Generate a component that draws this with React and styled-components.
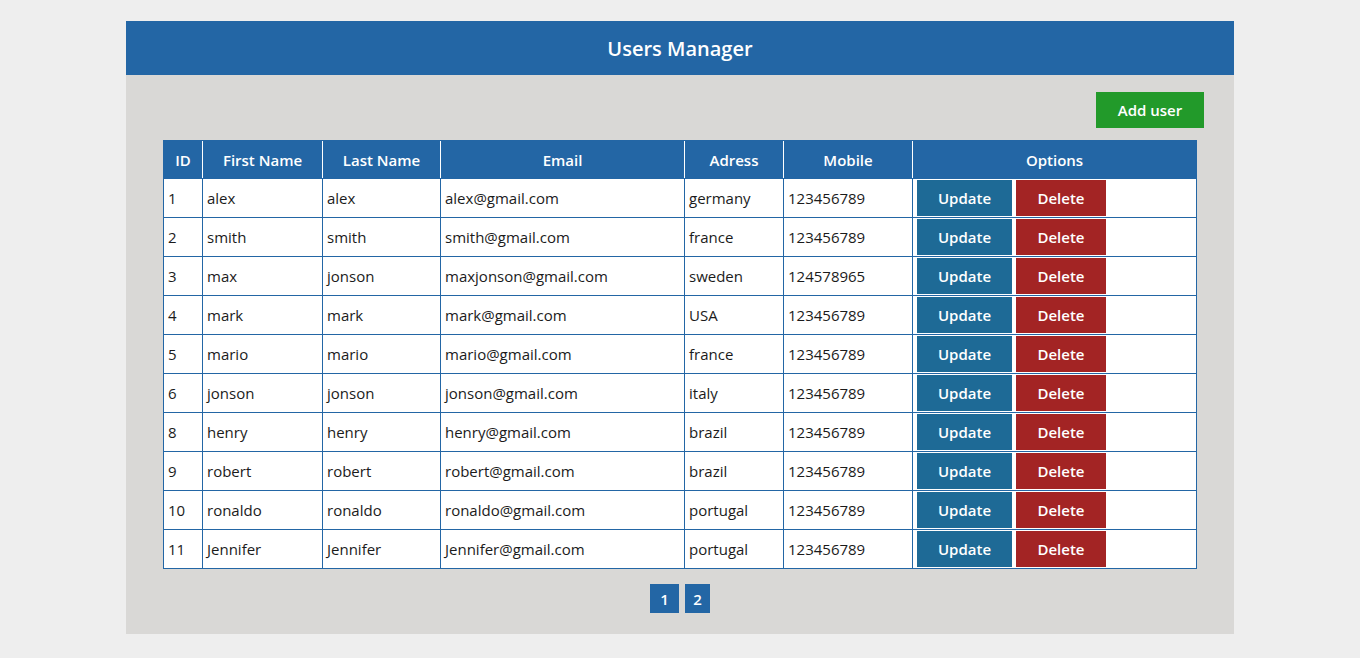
import React from "react";
import styled, { createGlobalStyle } from "styled-components";

const Global = createGlobalStyle`
  html, body { margin: 0; padding: 0; background: #eeeeee; }
  body { font-family: "Open Sans", "Noto Sans", sans-serif; }
  * { box-sizing: border-box; }
`;

const Page = styled.div`
  padding: 21px 126px 24px;
`;

const Panel = styled.div`
  background: #d9d8d6;
  display: flex;
  flex-direction: column;
`;

const Header = styled.header`
  height: 54px;
  background: #2366a5;
  color: #fff;
  display: flex;
  align-items: center;
  justify-content: center;
  font-size: 20px;
  font-weight: 600;
`;

const Body = styled.div`
  padding: 17px 37px 21px 37px;
  display: flex;
  flex-direction: column;
`;

const Toolbar = styled.div`
  display: flex;
  justify-content: flex-end;
  margin: 0 -7px 12px 0;
`;

const Button = styled.button`
  border: none;
  font-family: inherit;
  color: #fff;
  font-size: 15px;
  font-weight: 600;
  height: ${(p) => p.$h || 36}px;
  width: ${(p) => p.$w}px;
  background: ${(p) => p.$bg};
  padding: 0;
  cursor: pointer;
`;

const Table = styled.table`
  width: 1034px;
  border-spacing: 0;
  border: 1px solid #2366a5;
  table-layout: fixed;
  font-size: 15px;
`;

const Th = styled.th`
  background: #2366a5;
  color: #fff;
  font-weight: 600;
  height: 37px;
  padding: 0;
  text-align: center;
  border-left: ${(p) => (p.$first ? "none" : "1px solid #fff")};
`;

const Td = styled.td`
  height: 39px;
  padding: ${(p) => (p.$opts ? "1px 4px" : "0 4px")};
  background: #fff;
  color: #1b1b1b;
  border-top: 1px solid #2366a5;
  border-left: ${(p) => (p.$first ? "none" : "1px solid #2366a5")};
  white-space: nowrap;
  vertical-align: middle;
`;

const Actions = styled.div`
  display: flex;
  gap: 4px;
`;

const Pager = styled.div`
  display: flex;
  justify-content: center;
  gap: 6px;
  margin-top: 15px;
`;

const PageBtn = styled.button`
  border: none;
  background: #2366a5;
  color: #fff;
  font-family: inherit;
  font-size: 15px;
  font-weight: 600;
  height: 29px;
  width: ${(p) => p.$w}px;
  padding: 0;
`;

const users = [
  [1, "alex", "alex", "alex@gmail.com", "germany", "123456789"],
  [2, "smith", "smith", "smith@gmail.com", "france", "123456789"],
  [3, "max", "jonson", "maxjonson@gmail.com", "sweden", "124578965"],
  [4, "mark", "mark", "mark@gmail.com", "USA", "123456789"],
  [5, "mario", "mario", "mario@gmail.com", "france", "123456789"],
  [6, "jonson", "jonson", "jonson@gmail.com", "italy", "123456789"],
  [8, "henry", "henry", "henry@gmail.com", "brazil", "123456789"],
  [9, "robert", "robert", "robert@gmail.com", "brazil", "123456789"],
  [10, "ronaldo", "ronaldo", "ronaldo@gmail.com", "portugal", "123456789"],
  [11, "Jennifer", "Jennifer", "Jennifer@gmail.com", "portugal", "123456789"],
];

const cols = [38, 120, 118, 244, 99, 129, 284];
const heads = ["ID", "First Name", "Last Name", "Email", "Adress", "Mobile", "Options"];

export default function App() {
  return (
    <>
      <Global />
      <Page>
        <Panel>
          <Header>Users Manager</Header>
          <Body>
            <Toolbar>
              <Button $bg="#229a2a" $w={108}>Add user</Button>
            </Toolbar>
            <Table>
              <colgroup>
                {cols.map((w, i) => (
                  <col key={i} style={{ width: w }} />
                ))}
              </colgroup>
              <thead>
                <tr>
                  {heads.map((h, i) => (
                    <Th key={h} $first={i === 0}>{h}</Th>
                  ))}
                </tr>
              </thead>
              <tbody>
                {users.map((u) => (
                  <tr key={u[0]}>
                    {u.map((v, i) => (
                      <Td key={i} $first={i === 0}>{v}</Td>
                    ))}
                    <Td $opts>
                      <Actions>
                        <Button $bg="#1e6a96" $w={95}>Update</Button>
                        <Button $bg="#a32424" $w={90}>Delete</Button>
                      </Actions>
                    </Td>
                  </tr>
                ))}
              </tbody>
            </Table>
            <Pager>
              <PageBtn $w={29}>1</PageBtn>
              <PageBtn $w={25}>2</PageBtn>
            </Pager>
          </Body>
        </Panel>
      </Page>
    </>
  );
}
